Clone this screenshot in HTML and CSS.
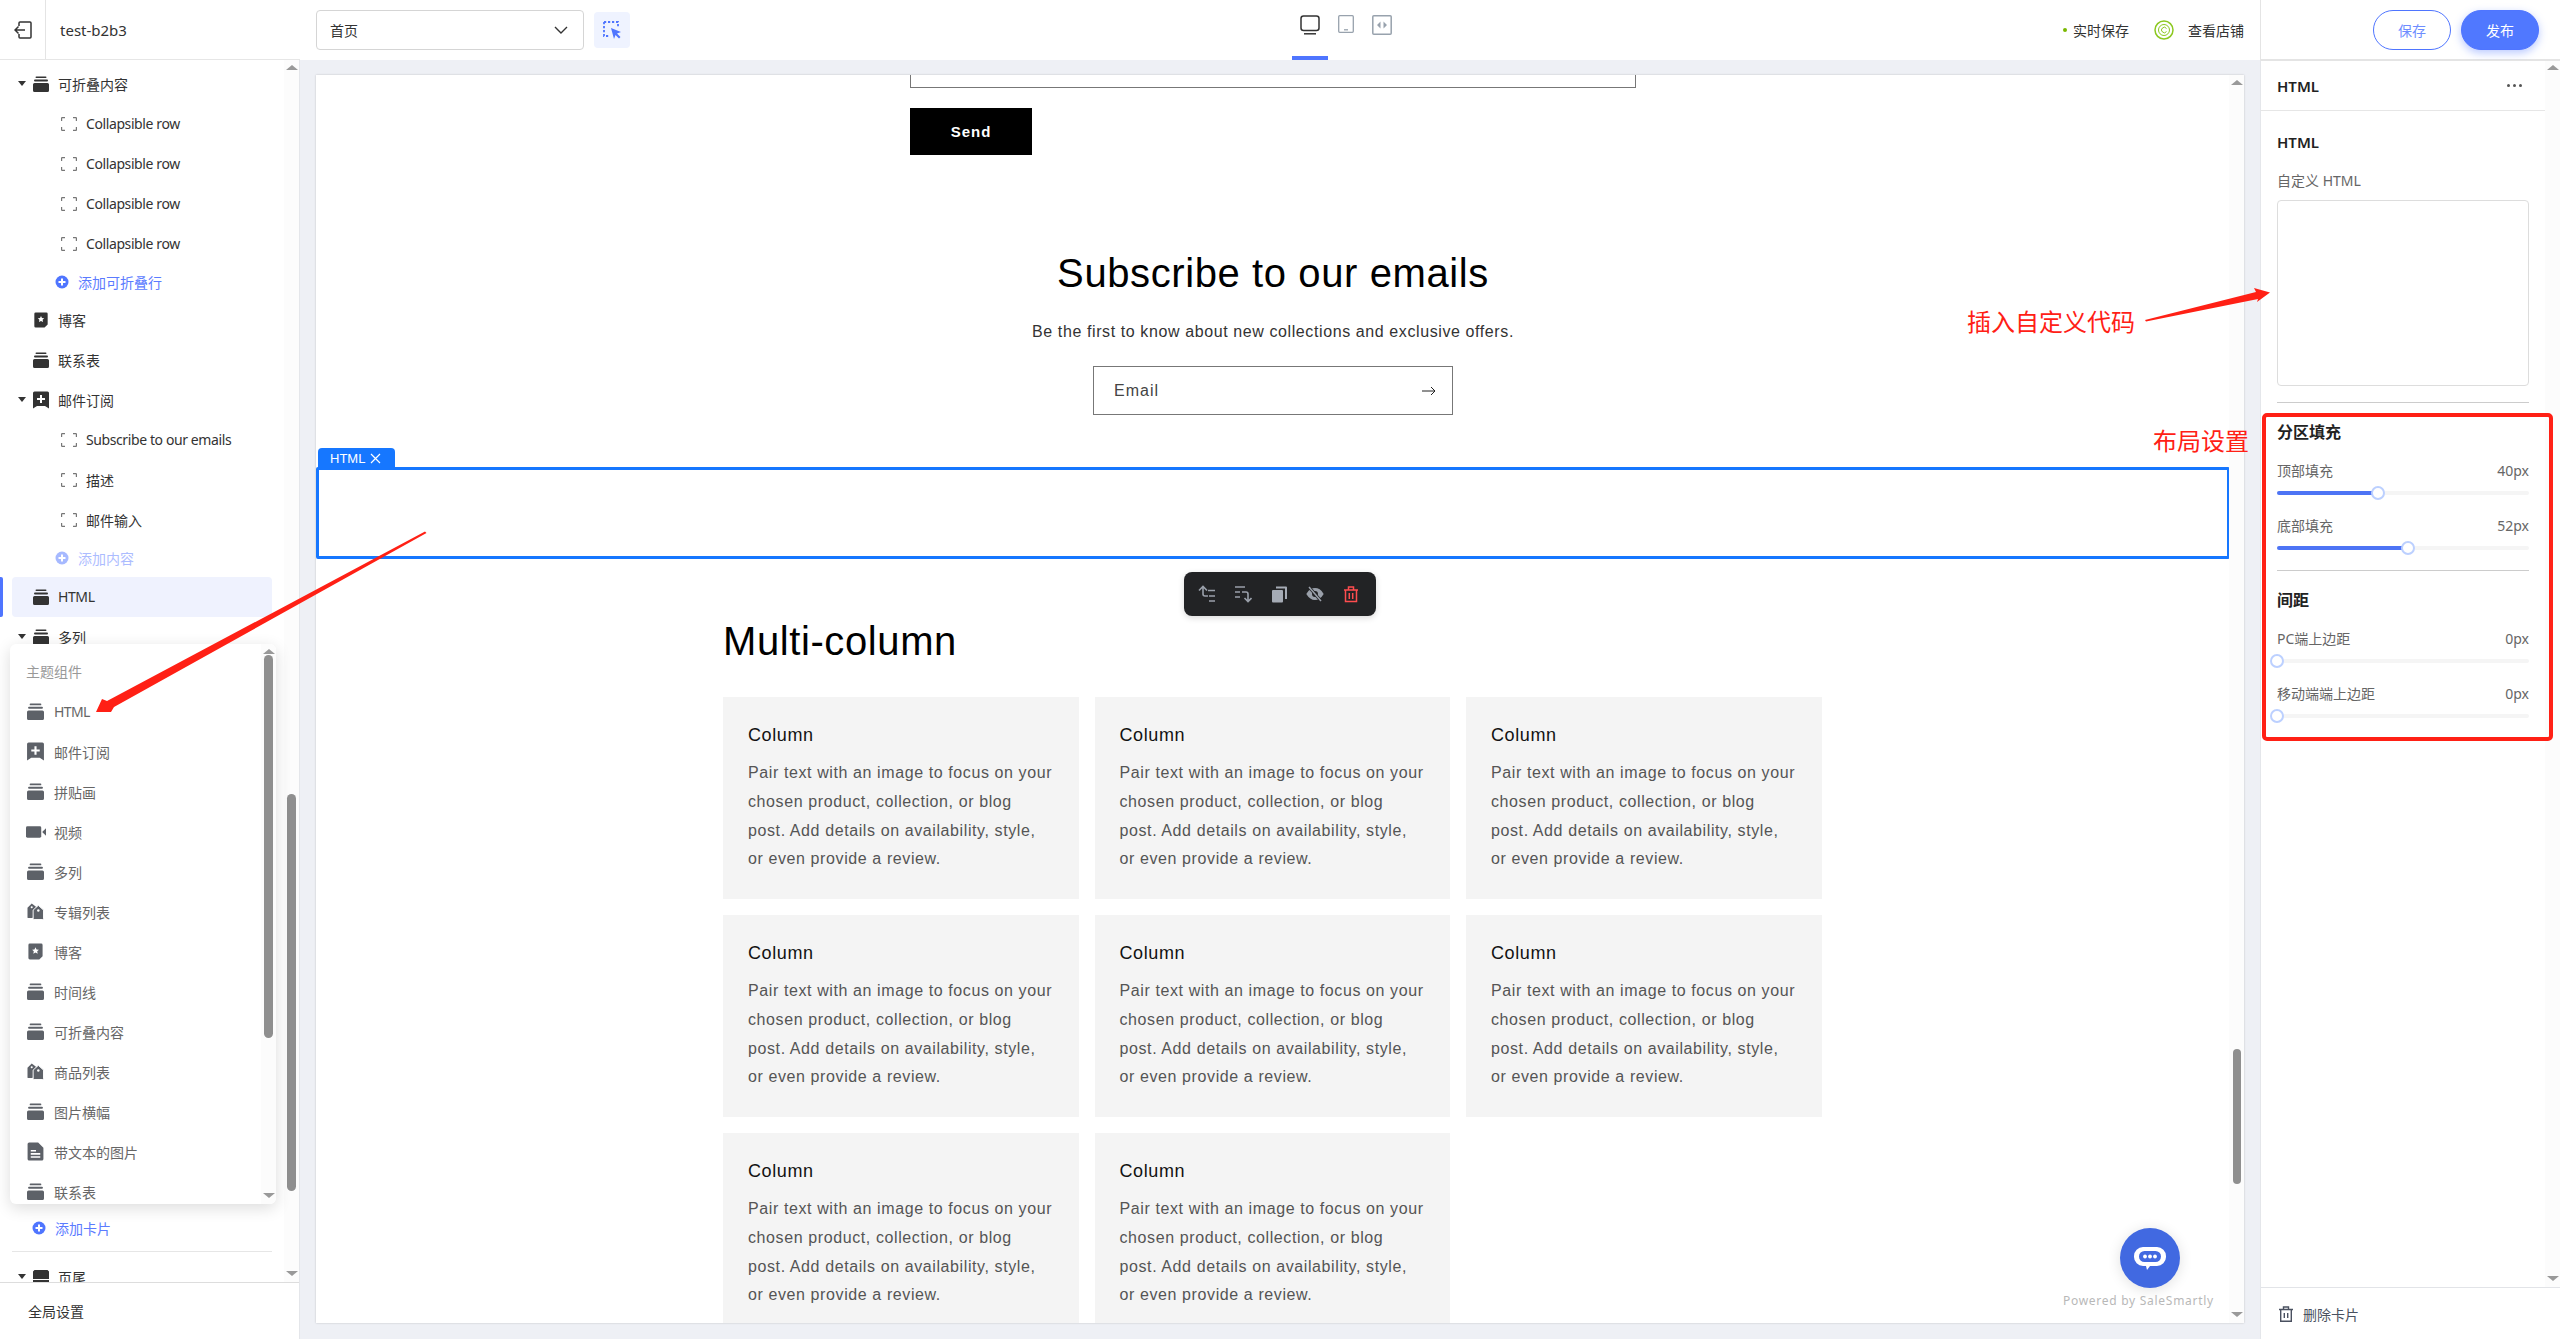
FILE: index.html
```html
<!DOCTYPE html>
<html lang="zh-CN">
<head>
  <meta charset="UTF-8" />
  <title>test-b2b3</title>
  <link rel="stylesheet" href="styles.css">
</head>
<body>
  <svg class="defs" width="0" height="0">
    <symbol id="i-stack" viewBox="0 0 16 16">
      <rect x="2.500" y="0.500" width="11" height="1.600" rx="0.800"/>
      <rect x="1" y="3.500" width="14" height="2" rx="1"/>
      <path d="M1.500 7h13a1.500 1.500 0 0 1 1.500 1.500v6a1.500 1.500 0 0 1-1.500 1.500h-13A1.500 1.500 0 0 1 0 14.500v-6A1.500 1.500 0 0 1 1.500 7z"/>
    </symbol>
    <symbol id="i-blog" viewBox="-1 -1 18 20">
      <path d="M2 0.500h12a1.500 1.500 0 0 1 1.500 1.500v12l-3.500 3.500H2A1.500 1.500 0 0 1 0.500 16V2A1.500 1.500 0 0 1 2 0.500z"/>
      <path fill="#fff" d="M8 4.500l1.100 2.300 2.500.3-1.800 1.700.5 2.500L8 10l-2.300 1.300.5-2.500-1.800-1.700 2.500-.3z"/>
    </symbol>
    <symbol id="i-mail" viewBox="0 0 16 18">
      <path d="M1.500 0.500h13A1.500 1.500 0 0 1 16 2v15.500l-4-2.500H4l-4 2.500V2A1.500 1.500 0 0 1 1.500 0.500z"/>
      <path fill="#fff" d="M7 4h2v3h3v2H9v3H7V9H4V7h3z"/>
    </symbol>
    <symbol id="i-video" viewBox="0 0 21 13">
      <rect x="0" y="0.500" width="16" height="12" rx="1.500"/>
      <path d="M17 6.500l4-4v8z"/>
    </symbol>
    <symbol id="i-tag" viewBox="0 0 18 18">
      <path d="M5 0.500L9.500 4 L6 16H1.500A1 1 0 0 1 .500 15V5z"/>
      <path stroke="#fff" stroke-width="1" d="M12 2.500l5.500 5v9a1 1 0 0 1-1 1H7.500a1 1 0 0 1-1-1v-9z"/>
      <circle cx="12" cy="8" r="1.300" fill="#fff"/>
      <circle cx="5" cy="4.500" r="1.100" fill="#fff"/>
    </symbol>
    <symbol id="i-doc" viewBox="0 0 16 18">
      <path d="M2 0.500h8.500L15.500 5.500V16A1.500 1.500 0 0 1 14 17.500H2A1.500 1.500 0 0 1 0.500 16V2A1.500 1.500 0 0 1 2 0.500z"/>
      <path fill="#fff" d="M3.500 7.500h5v1.500h-5zM3.500 10.500h9V12h-9zM3.500 13.500h9V15h-9z"/>
    </symbol>
    <symbol id="i-corners" viewBox="0 0 16 14">
      <path fill="none" stroke="currentColor" stroke-width="1.200" d="M4 .6H1.200a.6.6 0 0 0-.6.600v2.800M12 .6h2.800a.6.6 0 0 1 .6.600v2.800M4 13.400H1.200a.6.6 0 0 1-.6-.6V10M12 13.400h2.800a.6.6 0 0 0 .6-.6V10"/>
    </symbol>
    <symbol id="i-plus" viewBox="0 0 14 14">
      <circle cx="7" cy="7" r="6.500"/>
      <path fill="#fff" d="M6 3.500h2V6h2.500v2H8v2.500H6V8H3.500V6H6z"/>
    </symbol>
  </svg>

  <header class="topbar">
    <div class="top-left">
      <div class="back">
        <svg width="18" height="18" viewBox="0 0 18 18" fill="none" stroke="#333" stroke-width="1.500"><path d="M5 5V2a1 1 0 0 1 1-1h10a1 1 0 0 1 1 1v14a1 1 0 0 1-1 1H6a1 1 0 0 1-1-1v-3"/><path d="M1 9h10M4.500 5.500L1 9l3.500 3.500"/></svg>
      </div>
      <div class="shop-name">test-b2b3</div>
    </div>
    <div class="top-page">
      <div class="page-select">
        <span>首页</span>
        <svg width="14" height="8" viewBox="0 0 14 8" fill="none" stroke="#333" stroke-width="1.400"><path d="M1 1l6 6 6-6"/></svg>
      </div>
      <div class="pick-btn">
        <svg width="18" height="18" viewBox="0 0 18 18" fill="none"><path d="M1 1h14v5M1 1v14h5" stroke="#4f75ff" stroke-width="1.800" stroke-dasharray="2.200 1.800"/><path d="M8 7l10 4-4 1.500 3.500 3.500-1.500 1.500-3.500-3.500L11 18z" fill="#4f75ff"/></svg>
      </div>
    </div>
    <div class="devices">
      <div class="device device-on">
        <svg width="20" height="20" viewBox="0 0 20 20" fill="none" stroke="#333" stroke-width="1.500"><rect x="1" y="1" width="18" height="14.500" rx="2.500"/><path d="M4 18.800h12"/></svg>
      </div>
      <div class="device">
        <svg width="16" height="18" viewBox="0 0 16 18" fill="none" stroke="#98a2ad" stroke-width="1.300"><rect x=".7" y=".7" width="14.600" height="16.600" rx="1"/><path d="M6 14.800h4"/></svg>
      </div>
      <div class="device">
        <svg width="20" height="20" viewBox="0 0 20 20" fill="none"><rect x=".8" y=".8" width="18.400" height="18.400" rx="1" stroke="#98a2ad" stroke-width="1.500"/><path d="M8.500 6.500v7L5 10zM11.500 6.500v7L15 10z" fill="#98a2ad"/></svg>
      </div>
    </div>
    <div class="top-right">
      <div class="autosave"><i class="dot"></i>实时保存</div>
      <div class="view-shop">
        <svg width="20" height="20" viewBox="0 0 20 20" fill="none" stroke="#8cc820"><circle cx="10" cy="10" r="9" stroke-width="1.500"/><circle cx="10" cy="10" r="5.500"/><path d="M12.500 8.500a2.700 2.700 0 1 0 0 3"/></svg>
        <span>查看店铺</span>
      </div>
    </div>
    <div class="top-actions">
      <button class="btn btn-line">保存</button>
      <button class="btn btn-fill">发布</button>
    </div>
  </header>

  <div class="workspace">
    <aside class="sidebar">
      <div class="tree">
        <div class="tree-list">
          <div class="row"><i class="caret"></i><svg class="ico"><use href="#i-stack"/></svg>可折叠内容</div>
          <div class="row row-sub row-en"><svg class="ico-c"><use href="#i-corners"/></svg>Collapsible row</div>
          <div class="row row-sub row-en"><svg class="ico-c"><use href="#i-corners"/></svg>Collapsible row</div>
          <div class="row row-sub row-en"><svg class="ico-c"><use href="#i-corners"/></svg>Collapsible row</div>
          <div class="row row-sub row-en"><svg class="ico-c"><use href="#i-corners"/></svg>Collapsible row</div>
          <div class="row row-add"><svg class="ico-p"><use href="#i-plus"/></svg>添加可折叠行</div>
          <div class="row"><svg class="ico"><use href="#i-blog"/></svg>博客</div>
          <div class="row"><svg class="ico"><use href="#i-stack"/></svg>联系表</div>
          <div class="row"><i class="caret"></i><svg class="ico"><use href="#i-mail"/></svg>邮件订阅</div>
          <div class="row row-sub row-en"><svg class="ico-c"><use href="#i-corners"/></svg>Subscribe to our emails</div>
          <div class="row row-sub"><svg class="ico-c"><use href="#i-corners"/></svg>描述</div>
          <div class="row row-sub"><svg class="ico-c"><use href="#i-corners"/></svg>邮件输入</div>
          <div class="row row-add row-faded"><svg class="ico-p"><use href="#i-plus"/></svg>添加内容</div>
          <div class="row row-active row-en"><svg class="ico"><use href="#i-stack"/></svg>HTML</div>
          <div class="row"><i class="caret"></i><svg class="ico"><use href="#i-stack"/></svg>多列</div>
          <div class="tree-gap"></div>
          <div class="row row-add row-card"><svg class="ico-p"><use href="#i-plus"/></svg>添加卡片</div>
          <div class="tree-line"></div>
          <div class="row row-foot"><i class="caret"></i>
            <svg class="ico" viewBox="0 0 16 14" fill="none" stroke="#333"><path d="M.5 9V2A1.500 1.500 0 0 1 2 .5h12A1.500 1.500 0 0 1 15.500 2v7"/><rect x="0" y="10" width="16" height="4" fill="#333" stroke="none"/></svg>页尾</div>
        </div>
        <div class="scrollbar">
          <i class="arrow-up"></i>
          <div class="thumb-zone thumb-tree"><div class="thumb"></div></div>
          <i class="arrow-down"></i>
        </div>
      </div>
      <div class="global-set">全局设置</div>

      <div class="popup">
        <div class="popup-list">
          <div class="popup-title">主题组件</div>
          <div class="pop-row pop-en"><svg class="ico"><use href="#i-stack"/></svg>HTML</div>
          <div class="pop-row"><svg class="ico"><use href="#i-mail"/></svg>邮件订阅</div>
          <div class="pop-row"><svg class="ico"><use href="#i-stack"/></svg>拼贴画</div>
          <div class="pop-row"><svg class="ico ico-wide"><use href="#i-video"/></svg>视频</div>
          <div class="pop-row"><svg class="ico"><use href="#i-stack"/></svg>多列</div>
          <div class="pop-row"><svg class="ico"><use href="#i-tag"/></svg>专辑列表</div>
          <div class="pop-row"><svg class="ico"><use href="#i-blog"/></svg>博客</div>
          <div class="pop-row"><svg class="ico"><use href="#i-stack"/></svg>时间线</div>
          <div class="pop-row"><svg class="ico"><use href="#i-stack"/></svg>可折叠内容</div>
          <div class="pop-row"><svg class="ico"><use href="#i-tag"/></svg>商品列表</div>
          <div class="pop-row"><svg class="ico"><use href="#i-stack"/></svg>图片横幅</div>
          <div class="pop-row"><svg class="ico"><use href="#i-doc"/></svg>带文本的图片</div>
          <div class="pop-row"><svg class="ico"><use href="#i-stack"/></svg>联系表</div>
        </div>
        <div class="scrollbar scrollbar-pop">
          <i class="arrow-up"></i>
          <div class="thumb-zone"><div class="thumb"></div></div>
          <i class="arrow-down"></i>
        </div>
      </div>
    </aside>

    <main class="canvas">
      <div class="frame">
        <div class="page">
          <section class="contact">
            <div class="contact-input"></div>
            <button class="send">Send</button>
          </section>

          <section class="subscribe">
            <h2>Subscribe to our emails</h2>
            <p>Be the first to know about new collections and exclusive offers.</p>
            <div class="email-box">
              <span>Email</span>
              <svg width="14" height="10" viewBox="0 0 14 10" fill="none" stroke="#222"><path d="M0 5h13M9 1l4 4-4 4"/></svg>
            </div>
          </section>

          <section class="html-block">
            <div class="html-tab">HTML
              <svg width="11" height="11" viewBox="0 0 11 11" stroke="#fff" stroke-width="1.200"><path d="M1 1l9 9M10 1l-9 9"/></svg>
            </div>
            <div class="html-box"></div>
            <div class="tools">
              <svg width="18" height="18" viewBox="0 0 18 18" fill="none" stroke="#9aa0aa" stroke-width="1.600"><path d="M1 5.500L5 1.500l4 4M5 1.500V9a2 2 0 0 0 2 2h3"/><path d="M10 5.500h7M11 11h6M11 16h6"/></svg>
              <svg width="18" height="18" viewBox="0 0 18 18" fill="none" stroke="#9aa0aa" stroke-width="1.600"><path d="M1 2h10M1 7h5M1 12h5"/><path d="M8 7h4a2 2 0 0 1 2 2v7.500M10.500 13l3.500 3.500 3.500-3.500"/></svg>
              <svg width="18" height="18" viewBox="0 0 18 18"><rect x="2" y="5" width="11" height="12.500" rx="1" fill="#a5abb5"/><path d="M6 1.500h10a1 1 0 0 1 1 1V14h-2V3.500H6z" fill="#a5abb5"/></svg>
              <svg width="18" height="18" viewBox="0 0 18 18" fill="none" stroke="#9aa0aa" stroke-width="2"><path d="M1.500 9S4.500 4 9 4s7.500 5 7.500 5-3 5-7.500 5-7.500-5-7.500-5z" fill="#9aa0aa"/><circle cx="9" cy="9" r="2" stroke="#222325"/><path d="M3 2l12 14" stroke="#222325" stroke-width="3"/><path d="M3 2l12 14" stroke-width="1.500"/></svg>
              <svg width="18" height="18" viewBox="0 0 18 18" fill="none" stroke="#ff4d4f" stroke-width="1.500"><path d="M2 5h14M6.500 5V2h5v3M3.500 5v11.500h11V5M7.300 8v6M10.700 8v6"/></svg>
            </div>
          </section>

          <section class="multi">
            <h2>Multi-column</h2>
            <div class="cards">
              <div class="card"><h3>Column</h3><p>Pair text with an image to focus on your<br>chosen product, collection, or blog<br>post. Add details on availability, style,<br>or even provide a review.</p></div>
              <div class="card"><h3>Column</h3><p>Pair text with an image to focus on your<br>chosen product, collection, or blog<br>post. Add details on availability, style,<br>or even provide a review.</p></div>
              <div class="card"><h3>Column</h3><p>Pair text with an image to focus on your<br>chosen product, collection, or blog<br>post. Add details on availability, style,<br>or even provide a review.</p></div>
              <div class="card"><h3>Column</h3><p>Pair text with an image to focus on your<br>chosen product, collection, or blog<br>post. Add details on availability, style,<br>or even provide a review.</p></div>
              <div class="card"><h3>Column</h3><p>Pair text with an image to focus on your<br>chosen product, collection, or blog<br>post. Add details on availability, style,<br>or even provide a review.</p></div>
              <div class="card"><h3>Column</h3><p>Pair text with an image to focus on your<br>chosen product, collection, or blog<br>post. Add details on availability, style,<br>or even provide a review.</p></div>
              <div class="card"><h3>Column</h3><p>Pair text with an image to focus on your<br>chosen product, collection, or blog<br>post. Add details on availability, style,<br>or even provide a review.</p></div>
              <div class="card"><h3>Column</h3><p>Pair text with an image to focus on your<br>chosen product, collection, or blog<br>post. Add details on availability, style,<br>or even provide a review.</p></div>
            </div>
          </section>
        </div>
        <div class="scrollbar scrollbar-page">
          <i class="arrow-up"></i>
          <div class="thumb-zone thumb-page"><div class="thumb"></div></div>
          <i class="arrow-down"></i>
        </div>
        <div class="chat">
          <svg width="34" height="30" viewBox="0 0 34 30"><path d="M10 4h14a9 9 0 0 1 9 9v1a9 9 0 0 1-9 9h-7l-3 4-1-4h-3a9 9 0 0 1-9-9v-1a9 9 0 0 1 9-9z" fill="#fff"/><rect x="6" y="8" width="22" height="11" rx="5.500" fill="#4169e1"/><circle cx="12" cy="13.500" r="1.900" fill="#fff"/><circle cx="17" cy="13.500" r="1.900" fill="#fff"/><circle cx="22" cy="13.500" r="1.900" fill="#fff"/></svg>
        </div>
        <div class="powered">Powered by SaleSmartly</div>
      </div>
    </main>

    <aside class="panel">
      <div class="panel-body">
        <div class="panel-head"><strong>HTML</strong><span class="more"><i></i><i></i><i></i></span></div>
        <div class="panel-section">
          <h4>HTML</h4>
          <label class="field-label">自定义 HTML</label>
          <div class="code-area"></div>
        </div>
        <div class="panel-line"></div>
        <div class="panel-section panel-section-b">
          <h5>分区填充</h5>
          <div class="slider-row"><span>顶部填充</span><span>40px</span></div>
          <div class="slider"><div class="fill fill-40"></div><i class="knob"></i></div>
          <div class="slider-row"><span>底部填充</span><span>52px</span></div>
          <div class="slider"><div class="fill fill-52"></div><i class="knob"></i></div>
          <div class="panel-line panel-line-in"></div>
          <h5>间距</h5>
          <div class="slider-row"><span>PC端上边距</span><span>0px</span></div>
          <div class="slider"><div class="fill fill-0"></div><i class="knob"></i></div>
          <div class="slider-row"><span>移动端端上边距</span><span>0px</span></div>
          <div class="slider"><div class="fill fill-0"></div><i class="knob"></i></div>
        </div>
        <div class="scrollbar scrollbar-panel">
          <i class="arrow-up"></i>
          <div class="thumb-zone"></div>
          <i class="arrow-down"></i>
        </div>
      </div>
      <div class="panel-foot">
        <svg width="14" height="16" viewBox="0 0 14 16" fill="none" stroke="#4a5160" stroke-width="1.400"><path d="M0 3.500h14M4.500 3.500V1h5v2.500M1.700 3.500v11.800h10.600V3.500M5.300 7v5M8.700 7v5"/></svg>
        删除卡片
      </div>
    </aside>
  </div>

  <div class="note note-code">插入自定义代码</div>
  <div class="note note-layout">布局设置</div>
  <div class="red-box"></div>
  <svg class="marks" width="2560" height="1339" viewBox="0 0 2560 1339">
    <path fill="#ff2015" d="M2145 320L2256 292L2254 288L2270 292.500L2257 302L2258 299L2146 321.500z"/>
    <path fill="#ff2015" d="M96 712L102 699L107 701L425 531.500L426.500 533L114 707L111 712z"/>
  </svg>
</body>
</html>
```

FILE: styles.css
```css
* {
  box-sizing: border-box;
}

html, body {
  margin: 0;
  height: 100%;
}

body {
  position: relative;
  width: 2560px;
  height: 1339px;
  overflow: hidden;
  background: #fff;
  color: #333;
  font-family: "Noto Sans", "Noto Sans CJK SC", sans-serif;
  font-size: 14px;
}

.defs {
  position: absolute;
}

/* top bar */
.topbar {
  display: flex;
  align-items: center;
  height: 60px;
  background: #fff;
  white-space: nowrap;
}

.topbar > div {
  flex: none;
}

.top-left {
  display: flex;
  align-items: center;
  width: 300px;
  height: 100%;
  border-bottom: 1px solid #e6e6e6;
}

.back {
  display: flex;
  align-items: center;
  justify-content: center;
  width: 46px;
  height: 100%;
  border-right: 1px solid #e4e4e4;
}

.shop-name {
  margin-left: 14px;
  font-size: 15px;
}

.top-page {
  display: flex;
  align-items: center;
  gap: 10px;
  margin-left: 16px;
}

.page-select {
  display: flex;
  align-items: center;
  justify-content: space-between;
  width: 268px;
  height: 40px;
  padding: 0 15px 0 13px;
  border: 1px solid #d5d5d5;
  border-radius: 4px;
}

.pick-btn {
  display: flex;
  align-items: center;
  justify-content: center;
  width: 36px;
  height: 36px;
  background: #eff3ff;
  border-radius: 4px;
}

.devices {
  display: flex;
  margin-left: 662px;
  height: 60px;
}

.device {
  display: flex;
  justify-content: center;
  width: 36px;
  padding-top: 15px;
}

.device-on {
  border-bottom: 4px solid #4f75ff;
}

.top-right {
  display: flex;
  align-items: center;
  margin-left: 663px;
}

.autosave {
  display: flex;
  align-items: center;
  width: 91px;
}

.dot {
  width: 4px;
  height: 4px;
  margin-right: 6px;
  border-radius: 50%;
  background: #7ab800;
}

.view-shop {
  display: flex;
  align-items: center;
  gap: 14px;
}

.top-actions {
  display: flex;
  gap: 10px;
  height: 60px;
  padding: 10px 21px 10px 112px;
  margin-left: 16px;
  border-left: 1px solid #e4e4e4;
  border-bottom: 1px solid #e4e4e4;
}

.btn {
  width: 78px;
  height: 40px;
  border-radius: 20px;
  border: 1px solid #4f75ff;
  font-family: inherit;
  font-size: 14px;
}

.btn-line {
  background: #fff;
  color: #6e8dff;
}

.btn-fill {
  background: #5078ff;
  color: #fff;
  box-shadow: 0 3px 8px rgba(80, 120, 255, 0.4);
}

.workspace {
  display: flex;
  height: 1279px;
}

/* left tree */
.sidebar {
  position: relative;
  display: flex;
  flex-direction: column;
  flex: none;
  width: 300px;
  border-right: 1px solid #e4e6ea;
}

.tree {
  position: relative;
  height: 1223px;
  overflow: hidden;
  border-bottom: 1px solid #ddd;
}

.tree-list {
  width: 272px;
  margin-left: 12px;
  padding-top: 4px;
}

.row {
  position: relative;
  display: flex;
  align-items: center;
  height: 40px;
  padding-left: 21px;
  padding-bottom: 1px;
  color: #333;
}

.row-sub {
  padding-left: 49px;
}

.row-en {
  letter-spacing: -0.4px;
}

.row-add {
  height: 36px;
  padding-left: 43px;
  color: #5b7bff;
}

.row-faded {
  height: 37px;
  opacity: 0.5;
}

.row-active {
  background: #eff2fe;
  border-radius: 4px;
  width: 260px;
}

.row-active::before {
  content: "";
  position: absolute;
  left: -12px;
  top: 0;
  width: 3px;
  height: 100%;
  background: #4f75ff;
  border-radius: 0 2px 2px 0;
}

.row-card {
  padding-left: 20px;
}

.row-card .ico-p {
  margin-right: 9px;
}

.caret {
  position: absolute;
  left: 6px;
  top: 17px;
  border: 4px solid transparent;
  border-top: 5px solid #333;
  border-bottom: 0;
}

.ico {
  flex: none;
  width: 16px;
  height: 18px;
  margin-right: 9px;
  fill: #333;
}

.ico-c {
  flex: none;
  width: 16px;
  height: 14px;
  margin-right: 9px;
  color: #777;
}

.ico-p {
  flex: none;
  width: 14px;
  height: 14px;
  margin-right: 9px;
  fill: #4f75ff;
}

.tree-gap {
  height: 553px;
}

.tree-line {
  width: 260px;
  height: 1px;
  margin-top: 5px;
  background: #e6e6e6;
}

.row-foot {
  margin-top: 5px;
  height: 40px;
}

.scrollbar {
  position: absolute;
  right: 0;
  top: 0;
  bottom: 0;
  width: 15px;
  display: flex;
  flex-direction: column;
  align-items: center;
  background: #fcfcfc;
}

.arrow-up {
  flex: none;
  margin-top: 5px;
  border: 6px solid transparent;
  border-bottom: 5px solid #999;
  border-top: 0;
}

.arrow-down {
  flex: none;
  margin-bottom: 6px;
  border: 6px solid transparent;
  border-top: 5px solid #999;
  border-bottom: 0;
}

.thumb-zone {
  flex: 1;
  width: 100%;
  display: flex;
  justify-content: center;
}

.thumb-tree {
  padding-top: 724px;
  padding-bottom: 80px;
}

.thumb {
  width: 9px;
  height: 100%;
  background: #8f8f8f;
  border-radius: 5px;
}

.global-set {
  display: flex;
  align-items: center;
  flex: 1;
  padding-left: 28px;
}

/* component popup */
.popup {
  position: absolute;
  left: 10px;
  top: 584px;
  width: 266px;
  height: 560px;
  overflow: hidden;
  background: #fff;
  border-radius: 6px;
  box-shadow: 0 4px 16px rgba(0, 0, 0, 0.14);
}

.popup-list {
  padding: 8px 0 0 16px;
}

.popup-title {
  height: 40px;
  line-height: 40px;
  color: #999;
}

.pop-row {
  display: flex;
  align-items: center;
  height: 40px;
  padding-bottom: 1px;
  color: #666;
}

.pop-en {
  letter-spacing: -0.6px;
}

.pop-row .ico {
  width: 17px;
  height: 19px;
  margin-right: 10px;
  margin-left: 1px;
  fill: #5d6168;
}

.pop-row .ico-wide {
  width: 20px;
  height: 14px;
  margin-left: 0;
  margin-right: 8px;
}

.scrollbar-pop .thumb-zone {
  padding: 1px 0 155px;
}

/* canvas */
.canvas {
  flex: none;
  width: 1960px;
  padding: 15px 16px 16px;
  background: #eef0f5;
}

.frame {
  position: relative;
  width: 1928px;
  height: 1248px;
  overflow: hidden;
  background: #fff;
  box-shadow: 0 0 2px rgba(0, 0, 0, 0.2);
}

.page {
  width: 1914px;
  color: #121212;
  font-family: "Liberation Sans", sans-serif;
}

.contact {
  height: 152px;
  padding-left: 594px;
}

.contact-input {
  width: 726px;
  height: 13px;
  border: 1px solid #777;
  border-top: 0;
}

.send {
  display: block;
  width: 122px;
  height: 47px;
  margin-top: 20px;
  border: 0;
  background: #000;
  color: #fff;
  font-family: inherit;
  font-size: 15px;
  font-weight: bold;
  letter-spacing: 1px;
}

.subscribe {
  height: 240px;
  padding-top: 20px;
  text-align: center;
}

.subscribe h2 {
  margin: 0;
  font-size: 40px;
  font-weight: normal;
  line-height: 52px;
  letter-spacing: 0.6px;
  color: #000;
}

.subscribe p {
  margin: 21px 0 0;
  font-size: 16px;
  line-height: 24px;
  letter-spacing: 0.6px;
  color: #333;
}

.email-box {
  display: flex;
  align-items: center;
  justify-content: space-between;
  width: 360px;
  height: 49px;
  margin: 22px auto 0 777px;
  padding: 0 16px 0 20px;
  border: 1px solid #777;
  text-align: left;
  font-size: 16px;
  letter-spacing: 1px;
  color: #444;
}

.html-block {
  position: relative;
  height: 92px;
}

.html-tab {
  position: absolute;
  left: 2px;
  top: -19px;
  display: flex;
  align-items: center;
  gap: 5px;
  width: 77px;
  height: 20px;
  padding-left: 12px;
  background: #1677ff;
  border-radius: 4px 4px 0 0;
  color: #fff;
  font-size: 13px;
}

.html-box {
  height: 92px;
  border: 3px solid #1677ff;
  border-radius: 2px;
}

.tools {
  position: absolute;
  left: 868px;
  top: 105px;
  display: flex;
  align-items: center;
  gap: 18px;
  width: 192px;
  height: 44px;
  padding-left: 14px;
  background: #222325;
  border-radius: 8px;
  box-shadow: 0 2px 6px rgba(0, 0, 0, 0.15);
}

.multi {
  padding: 56px 0 0 407px;
}

.multi h2 {
  margin: 0;
  font-size: 40px;
  line-height: 52px;
  font-weight: normal;
  letter-spacing: 0.6px;
  color: #000;
}

.cards {
  display: grid;
  grid-template-columns: repeat(3, 355.5px);
  gap: 16px;
  margin-top: 30px;
}

.card {
  height: 202px;
  padding: 25px 24px 0 25px;
  background: #f4f4f4;
}

.card h3 {
  margin: 0;
  font-size: 18px;
  font-weight: normal;
  line-height: 27px;
  letter-spacing: 0.6px;
  color: #121212;
}

.card p {
  margin: 10px 0 0;
  font-size: 16px;
  line-height: 28.8px;
  letter-spacing: 0.6px;
  color: #555;
  white-space: nowrap;
}

.scrollbar-page .thumb-zone {
  padding: 964px 0 128px;
}

.scrollbar-page .thumb-zone .thumb {
  width: 8px;
}

.chat {
  position: absolute;
  left: 1804px;
  top: 1153px;
  display: flex;
  align-items: center;
  justify-content: center;
  width: 60px;
  height: 60px;
  background: #4169e1;
  border-radius: 50%;
  box-shadow: 0 2px 14px rgba(0, 0, 0, 0.12);
}

.powered {
  position: absolute;
  left: 1747px;
  top: 1217px;
  font-size: 12px;
  letter-spacing: 0.72px;
  color: #b8b8b8;
}

/* right panel */
.panel {
  display: flex;
  flex-direction: column;
  flex: none;
  width: 300px;
  border-left: 1px solid #e4e6ea;
  border-top: 1px solid #e4e4e4;
}

.panel-body {
  position: relative;
  height: 1227px;
  border-bottom: 1px solid #e2e4e8;
  overflow: hidden;
}

.panel-head {
  display: flex;
  align-items: center;
  justify-content: space-between;
  width: 284px;
  height: 50px;
  padding: 0 23px 0 16px;
  border-bottom: 1px solid #e6e6e6;
}

.panel-head strong,
.panel-section h4 {
  font-size: 15px;
  font-weight: 600;
  color: #222;
}

.more {
  display: flex;
  gap: 3px;
}

.more i {
  width: 3px;
  height: 3px;
  background: #555;
  border-radius: 50%;
}

.panel-section {
  width: 284px;
  padding: 0 16px;
}

.panel-section h4 {
  margin: 20px 0 0;
  line-height: 22px;
}

.field-label {
  display: block;
  margin-top: 18px;
  line-height: 20px;
  color: #666;
}

.code-area {
  height: 186px;
  margin-top: 9px;
  border: 1px solid #ddd;
  border-radius: 4px;
}

.panel-line {
  width: 252px;
  height: 1px;
  margin: 16px 0 0 16px;
  background: #ccc;
}

.panel-section-b h5 {
  margin: 17px 0 -4px;
  font-size: 16px;
  line-height: 24px;
  font-weight: 600;
  color: #222;
}

.slider-row {
  display: flex;
  justify-content: space-between;
  margin-top: 21px;
  line-height: 20px;
  color: #666;
}

.slider {
  position: relative;
  height: 4px;
  margin-top: 10px;
  background: #f5f5f5;
  border-radius: 2px;
}

.fill {
  height: 100%;
  background: #4d74f5;
  border-radius: 2px;
}

.knob {
  position: absolute;
  top: -5px;
  width: 14px;
  height: 14px;
  margin-left: -7px;
  background: #fff;
  border: 2px solid #bcd0ff;
  border-radius: 50%;
}

.fill-40 {
  width: 40%;
}

.fill-40 + .knob {
  left: 40%;
}

.fill-52 {
  width: 52%;
}

.fill-52 + .knob {
  left: 52%;
}

.fill-0 {
  width: 0;
}

.fill-0 + .knob {
  left: 0;
}

.panel-line-in {
  width: 100%;
  margin: 20px 0 0;
}

.scrollbar-panel .arrow-up {
  margin-top: 4px;
}

.panel-foot {
  display: flex;
  align-items: center;
  gap: 10px;
  flex: 1;
  padding-left: 18px;
  color: #4a5160;
}

/* red annotations over the page */
.note {
  position: absolute;
  font-size: 24px;
  line-height: 32px;
  color: #ff2015;
}

.note-code {
  left: 1967px;
  top: 306px;
}

.note-layout {
  left: 2153px;
  top: 425px;
}

.red-box {
  position: absolute;
  left: 2262px;
  top: 413px;
  width: 291px;
  height: 328px;
  border: 4px solid #ff2015;
  border-radius: 5px;
}

.marks {
  position: absolute;
  left: 0;
  top: 0;
  pointer-events: none;
}
```
